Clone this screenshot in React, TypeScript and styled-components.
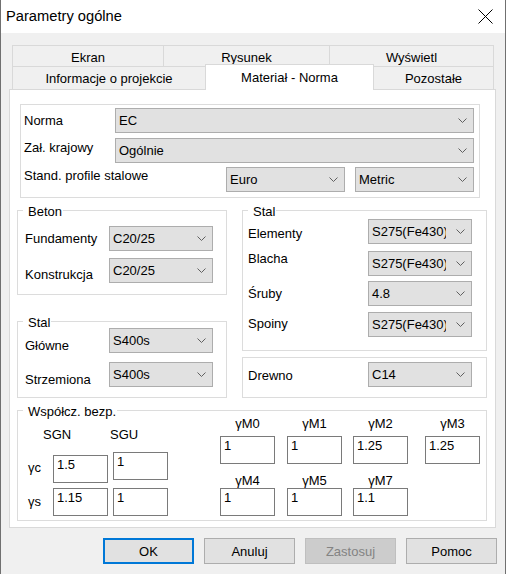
import React from "react";
import styled, { createGlobalStyle } from "styled-components";

const GlobalStyle = createGlobalStyle`
  *, *::before, *::after { box-sizing: border-box; }
  html, body { margin: 0; padding: 0; background: #fff; }
  body {
    font-family: "Liberation Sans", Arial, sans-serif;
    font-size: 13px;
    line-height: 15px;
    color: #000;
  }
`;

const Window = styled.div`
  width: 506px;
  height: 574px;
  border-left: 1px solid #707070;
  border-right: 1px solid #707070;
  background: #f0f0f0;
  display: flex;
  flex-direction: column;
`;

const TitleBar = styled.div`
  height: 33px;
  background: #fff;
  display: flex;
  align-items: center;
  justify-content: space-between;
  padding: 0 12px 0 5px;
`;

const Title = styled.span`
  font-size: 14.7px;
  line-height: 17px;
`;

const Body = styled.div`
  padding-top: 12px;
  display: flex;
  flex-direction: column;
`;

const TabStrip = styled.div`
  margin-left: 11px;
  display: flex;
  flex-direction: column;
`;

const TabRow = styled.div<{ $second?: boolean }>`
  display: flex;
  align-items: flex-end;
  height: ${(p) => (p.$second ? 23 : 22)}px;
  margin-top: ${(p) => (p.$second ? -1 : 0)}px;
`;

const Tab = styled.div<{ $w: number; $active?: boolean; $second?: boolean }>`
  width: ${(p) => p.$w}px;
  height: ${(p) => (p.$active ? 26 : p.$second ? 23 : 22)}px;
  margin-top: ${(p) => (p.$active ? -2 : 0)}px;
  margin-bottom: ${(p) => (p.$active ? -1 : 0)}px;
  border: 1px solid #d9d9d9;
  border-bottom-width: ${(p) => (p.$second ? 0 : 1)}px;
  background: ${(p) => (p.$active ? "#fff" : "#f0f0f0")};
  display: flex;
  align-items: center;
  justify-content: center;
  padding-top: ${(p) => (p.$second ? 0 : 2)}px;
  position: relative;
  z-index: ${(p) => (p.$active ? 1 : 0)};
  & + & {
    margin-left: -1px;
  }
`;

const Panel = styled.div`
  margin-left: 8px;
  width: 487px;
  background: #fff;
  border: 1px solid #d9d9d9;
  padding: 14px 0 6px 0;
  display: flex;
  flex-direction: column;
`;

const Group = styled.div<{ $w: number; $pad: string; $ml?: number; $mt?: number }>`
  position: relative;
  width: ${(p) => p.$w}px;
  margin-left: ${(p) => p.$ml ?? 0}px;
  margin-top: ${(p) => p.$mt ?? 0}px;
  border: 1px solid #dcdcdc;
  padding: ${(p) => p.$pad};
  display: flex;
  flex-direction: column;
`;

const Legend = styled.span`
  position: absolute;
  top: -7px;
  left: 5px;
  padding: 0 1px 0 5px;
  background: #fff;
  white-space: nowrap;
`;

const Columns = styled.div`
  display: grid;
  grid-template-columns: 210px 245px;
  column-gap: 15px;
  margin: 12px 0 0 7px;
`;

const Column = styled.div`
  display: flex;
  flex-direction: column;
`;

const FieldRow = styled.div<{ $label: number; $mt?: number }>`
  display: grid;
  grid-template-columns: ${(p) => p.$label}px 104px;
  align-items: start;
  margin-top: ${(p) => p.$mt ?? 0}px;
`;

const NormaRow = styled.div<{ $mt?: number }>`
  display: flex;
  align-items: flex-start;
  margin-top: ${(p) => p.$mt ?? 0}px;
`;

const Label = styled.span<{ $dy?: number; $w?: number }>`
  margin-top: ${(p) => 5 + (p.$dy ?? 0)}px;
  width: ${(p) => (p.$w ? `${p.$w}px` : "auto")};
  flex: none;
  white-space: nowrap;
`;

const ComboBox = styled.div<{ $w?: number }>`
  height: 25px;
  width: ${(p) => (p.$w ? `${p.$w}px` : "auto")};
  flex: ${(p) => (p.$w ? "none" : "1")};
  border: 1px solid #adadad;
  background: #e1e1e1;
  display: flex;
  align-items: center;
`;

const ComboValue = styled.span`
  flex: 1;
  min-width: 0;
  padding-left: 3px;
  overflow: hidden;
  white-space: nowrap;
`;

const ComboArrow = styled.span`
  flex: none;
  width: 25px;
  display: flex;
  justify-content: flex-end;
  padding-right: 6px;
`;

const Chevron = () => (
  <svg width="9" height="5" viewBox="0 0 9 5">
    <polyline points="0.5,0.5 4.5,4.5 8.5,0.5" fill="none" stroke="#606060" strokeWidth="1" />
  </svg>
);

const Combo = ({ value, w }: { value: string; w?: number }) => (
  <ComboBox $w={w}>
    <ComboValue>{value}</ComboValue>
    <ComboArrow>
      <Chevron />
    </ComboArrow>
  </ComboBox>
);

const Coeffs = styled.div`
  display: flex;
`;

const LeftBlock = styled.div`
  width: 150px;
  display: flex;
  flex-direction: column;
`;

const HeaderRow = styled.div`
  margin-top: 16px;
  height: 15px;
  display: flex;
  padding-left: 25px;
`;

const HeaderCell = styled.span<{ $w?: number }>`
  width: ${(p) => (p.$w ? `${p.$w}px` : "auto")};
`;

const GammaRow = styled.div<{ $mt: number }>`
  display: grid;
  grid-template-columns: 30px 55px 55px;
  column-gap: 5px;
  align-items: start;
  margin-top: ${(p) => p.$mt}px;
`;

const GammaLabel = styled.span<{ $dy: number }>`
  padding-left: 10px;
  margin-top: ${(p) => p.$dy}px;
  white-space: nowrap;
`;

const TextBox = styled.div<{ $dy?: number }>`
  width: 55px;
  height: 28px;
  margin-top: ${(p) => p.$dy ?? 0}px;
  border: 1px solid #7a7a7a;
  background: #fff;
  padding: 1px 3px 0;
  white-space: nowrap;
`;

const RightBlock = styled.div`
  margin: 5px 0 0 52px;
  display: flex;
  flex-direction: column;
`;

const MRow = styled.div<{ $mt?: number }>`
  display: grid;
  grid-template-columns: 67px 66px 72px 55px;
  align-items: start;
  margin-top: ${(p) => p.$mt ?? 0}px;
`;

const MLabel = styled.span`
  width: 55px;
  height: 15px;
  text-align: center;
`;

const ButtonRow = styled.div`
  display: flex;
  justify-content: flex-end;
  gap: 10px;
  padding: 10px 8px 0 0;
`;

const Button = styled.button<{ $primary?: boolean }>`
  width: 91px;
  height: 26px;
  font: inherit;
  color: #000;
  background: #e1e1e1;
  border: ${(p) => (p.$primary ? "2px solid #0078d7" : "1px solid #adadad")};
  padding: 0;
  &:disabled {
    background: #cccccc;
    border-color: #bfbfbf;
    color: #838383;
  }
`;

const CloseIcon = () => (
  <svg width="15" height="15" viewBox="0 0 15 15">
    <path d="M0.5 0.5 L14.5 14.5 M14.5 0.5 L0.5 14.5" stroke="#000" strokeWidth="1" fill="none" />
  </svg>
);

const steel = [
  { label: "Elementy", value: "S275(Fe430)", mt: 0, dy: 2 },
  { label: "Blacha", value: "S275(Fe430)", mt: 7, dy: -5 },
  { label: "Śruby", value: "4.8", mt: 5, dy: 0 },
  { label: "Spoiny", value: "S275(Fe430)", mt: 6, dy: -1 },
];

export default function App() {
  return (
    <>
      <GlobalStyle />
      <Window>
        <TitleBar>
          <Title>Parametry ogólne</Title>
          <CloseIcon />
        </TitleBar>
        <Body>
          <TabStrip>
            <TabRow>
              <Tab $w={152}>Ekran</Tab>
              <Tab $w={167}>Rysunek</Tab>
              <Tab $w={165}>Wyświetl</Tab>
            </TabRow>
            <TabRow $second>
              <Tab $second $w={194}>Informacje o projekcie</Tab>
              <Tab $second $active $w={169}>Materiał - Norma</Tab>
              <Tab $second $w={121}>Pozostałe</Tab>
            </TabRow>
          </TabStrip>
          <Panel>
            <Group $w={460} $ml={10} $pad="3px 5px 5px 3px">
              <NormaRow>
                <Label $w={91}>Norma</Label>
                <Combo value="EC" />
              </NormaRow>
              <NormaRow $mt={5}>
                <Label $w={91} $dy={-3}>Zał. krajowy</Label>
                <Combo value="Ogólnie" />
              </NormaRow>
              <NormaRow $mt={4}>
                <Label $w={202} $dy={-4}>Stand. profile stalowe</Label>
                <Combo value="Euro" w={119} />
                <Label $w={10} />
                <Combo value="Metric" w={119} />
              </NormaRow>
            </Group>

            <Columns>
              <Column>
                <Group $w={210} $pad="15px 13px 11px 7px">
                  <Legend>Beton</Legend>
                  <FieldRow $label={84}>
                    <Label>Fundamenty</Label>
                    <Combo value="C20/25" />
                  </FieldRow>
                  <FieldRow $label={84} $mt={7}>
                    <Label $dy={4}>Konstrukcja</Label>
                    <Combo value="C20/25" />
                  </FieldRow>
                </Group>
                <Group $w={210} $mt={26} $pad="6px 13px 10px 7px">
                  <Legend>Stal</Legend>
                  <FieldRow $label={84}>
                    <Label $dy={5}>Główne</Label>
                    <Combo value="S400s" />
                  </FieldRow>
                  <FieldRow $label={84} $mt={9}>
                    <Label $dy={5}>Strzemiona</Label>
                    <Combo value="S400s" />
                  </FieldRow>
                </Group>
              </Column>
              <Column>
                <Group $w={245} $pad="8px 14px 13px 5px">
                  <Legend>Stal</Legend>
                  {steel.map((s) => (
                    <FieldRow key={s.label} $label={120} $mt={s.mt}>
                      <Label $dy={s.dy}>{s.label}</Label>
                      <Combo value={s.value} />
                    </FieldRow>
                  ))}
                </Group>
                <Group $w={245} $mt={6} $pad="4px 14px 10px 5px">
                  <FieldRow $label={120}>
                    <Label $dy={1}>Drewno</Label>
                    <Combo value="C14" />
                  </FieldRow>
                </Group>
              </Column>
            </Columns>

            <Group $w={470} $ml={7} $mt={12} $pad="0 0 4px 0">
              <Legend>Współcz. bezp.</Legend>
              <Coeffs>
                <LeftBlock>
                  <HeaderRow>
                    <HeaderCell $w={67}>SGN</HeaderCell>
                    <HeaderCell>SGU</HeaderCell>
                  </HeaderRow>
                  <GammaRow $mt={10}>
                    <GammaLabel $dy={8}>γc</GammaLabel>
                    <TextBox $dy={3}>1.5</TextBox>
                    <TextBox>1</TextBox>
                  </GammaRow>
                  <GammaRow $mt={5}>
                    <GammaLabel $dy={6}>γs</GammaLabel>
                    <TextBox>1.15</TextBox>
                    <TextBox>1</TextBox>
                  </GammaRow>
                </LeftBlock>
                <RightBlock>
                  <MRow>
                    <MLabel>γM0</MLabel>
                    <MLabel>γM1</MLabel>
                    <MLabel>γM2</MLabel>
                    <MLabel>γM3</MLabel>
                  </MRow>
                  <MRow $mt={5}>
                    <TextBox>1</TextBox>
                    <TextBox>1</TextBox>
                    <TextBox>1.25</TextBox>
                    <TextBox>1.25</TextBox>
                  </MRow>
                  <MRow $mt={9}>
                    <MLabel>γM4</MLabel>
                    <MLabel>γM5</MLabel>
                    <MLabel>γM7</MLabel>
                  </MRow>
                  <MRow>
                    <TextBox>1</TextBox>
                    <TextBox>1</TextBox>
                    <TextBox>1.1</TextBox>
                  </MRow>
                </RightBlock>
              </Coeffs>
            </Group>
          </Panel>
          <ButtonRow>
            <Button $primary>OK</Button>
            <Button>Anuluj</Button>
            <Button disabled>Zastosuj</Button>
            <Button>Pomoc</Button>
          </ButtonRow>
        </Body>
      </Window>
    </>
  );
}
